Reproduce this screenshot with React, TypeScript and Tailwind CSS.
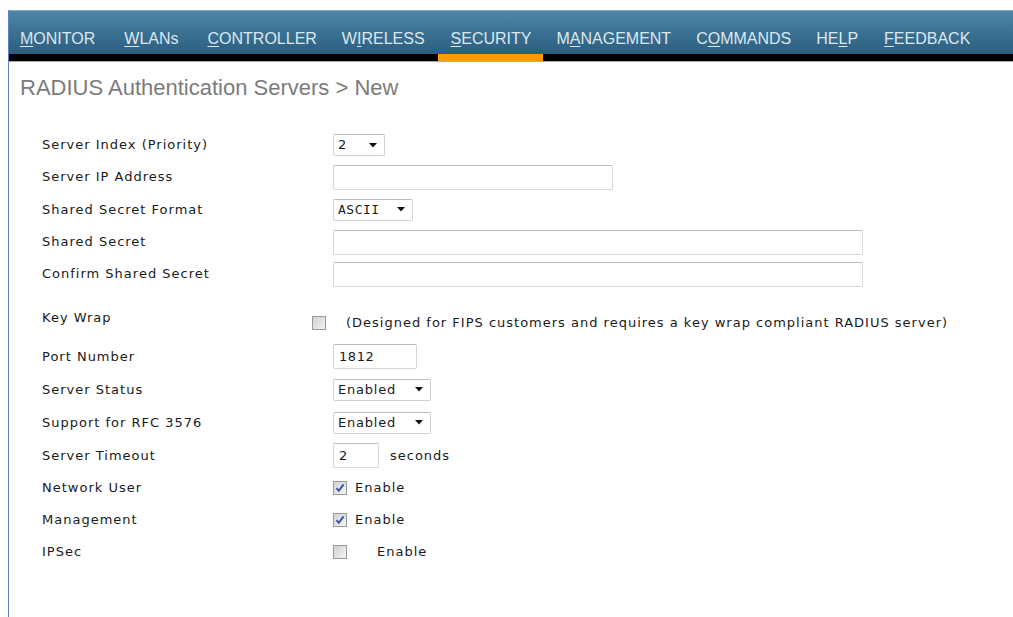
import React from 'react';

const navItems = [
  { name: 'MONITOR', key: 0, pad: 'pl-[11px] pr-[16px]' },
  { name: 'WLANs', key: 0, pad: 'pl-[13px] pr-[16px]' },
  { name: 'CONTROLLER', key: 0, pad: 'pl-[13px] pr-[12px]' },
  { name: 'WIRELESS', key: 1, pad: 'pl-[13px] pr-[13px]' },
  { name: 'SECURITY', key: 0, pad: 'pl-[13px] pr-[12px]', active: true },
  { name: 'MANAGEMENT', key: 1, pad: 'pl-[13px] pr-[12px]' },
  { name: 'COMMANDS', key: 1, pad: 'pl-[13px] pr-[12px]' },
  { name: 'HELP', key: 2, pad: 'pl-[13px] pr-[13px]' },
  { name: 'FEEDBACK', key: 0, pad: 'pl-[13px] pr-[13px]' },
];

function AccessKey({ text, index }: { text: string; index: number }) {
  return (
    <>
      {text.slice(0, index)}
      <span className="underline underline-offset-[2px]">{text[index]}</span>
      {text.slice(index + 1)}
    </>
  );
}

function Arrow() {
  return (
    <svg width="8" height="5" viewBox="0 0 8 5" className="shrink-0">
      <path d="M0 0h8L4 4.5z" fill="#111" />
    </svg>
  );
}

function Select({ value, width, mono }: { value: string; width: string; mono?: boolean }) {
  return (
    <div
      className={`flex h-[22px] items-center justify-between rounded-[2px] border border-[#d2d2d2] border-t-[#bdbdbd] bg-white pl-[4px] pr-[7px] ${width}`}
    >
      <span className={mono ? "font-['DejaVu_Sans_Mono',monospace] tracking-[0.5px]" : 'tracking-[0.8px]'}>{value}</span>
      <Arrow />
    </div>
  );
}

function TextBox({ value, width }: { value?: string; width: string }) {
  return (
    <div
      className={`flex h-[25px] items-center rounded-[2px] border border-[#d6d6d6] border-t-[#bcbcbc] bg-white pl-[5px] tracking-[0.6px] ${width}`}
    >
      {value}
    </div>
  );
}

function Checkbox({ checked }: { checked?: boolean }) {
  return (
    <div className="flex h-[14px] w-[14px] shrink-0 items-center justify-center border border-[#9a9a9a] bg-[linear-gradient(135deg,#d0d0d0,#f4f4f4)]">
      {checked && (
        <svg width="10" height="10" viewBox="0 0 10 10">
          <path d="M1.5 5.2l2.3 2.6L8.6 1.4" fill="none" stroke="#3552a8" strokeWidth="1.9" />
        </svg>
      )}
    </div>
  );
}

function Row({ label, height, children }: { label: string; height: string; children?: React.ReactNode }) {
  return (
    <div className={`flex items-center ${height}`}>
      <div className="w-[291px] shrink-0">{label}</div>
      {children}
    </div>
  );
}

export default function App() {
  return (
    <div className="h-[617px] w-[1013px] overflow-hidden bg-white pt-[10px]">
      <div className="ml-[8px] h-[607px] border-l border-[#5a82c0]">
        {/* top menu */}
        <nav className="flex border-t border-[#87a9c2] bg-[linear-gradient(to_bottom,#4d87a8_0px,#3a7193_22px,#2c5d7e_43px,#000_43px,#000_50px)] font-['Liberation_Sans',Arial,sans-serif] text-[16px] leading-[18px] text-[#dde7ee]">
          {navItems.map((item) => (
            <div key={item.name} className="flex flex-col">
              <div className={`flex h-[43px] items-end pb-[6px] ${item.pad}`}>
                <span>
                  <AccessKey text={item.name} index={item.key} />
                </span>
              </div>
              <div className={`h-[7px] ${item.active ? 'bg-[#ff9a00]' : ''}`} />
            </div>
          ))}
        </nav>
        <div className="h-px bg-[#a9a9a9]" />

        <h1 className="mt-[13px] pl-[11px] font-['Liberation_Sans',Arial,sans-serif] text-[22px] leading-[26px] text-[#7b7b7b]">
          RADIUS Authentication Servers &gt; New
        </h1>

        <div className="mt-[28px] pl-[33px] font-['DejaVu_Sans',Verdana,sans-serif] text-[13px] leading-[16px] tracking-[1px] text-[#1a1a1a]">
          <Row label="Server Index (Priority)" height="h-[32px]">
            <Select value="2" width="w-[52px]" />
          </Row>
          <Row label="Server IP Address" height="h-[32px]">
            <TextBox width="w-[280px]" />
          </Row>
          <Row label="Shared Secret Format" height="h-[33px]">
            <Select value="ASCII" width="w-[80px]" mono />
          </Row>
          <Row label="Shared Secret" height="h-[32px]">
            <TextBox width="w-[530px]" />
          </Row>
          <Row label="Confirm Shared Secret" height="h-[32px]">
            <TextBox width="w-[530px]" />
          </Row>

          <div className="mt-[16px] flex h-[34px] items-center">
            <div className="w-[270px] shrink-0 -translate-y-[5px]">Key Wrap</div>
            <Checkbox />
            <span className="ml-[20px]">
              (Designed for FIPS customers and requires a key wrap compliant RADIUS server)
            </span>
          </div>

          <Row label="Port Number" height="h-[33px]">
            <TextBox value="1812" width="w-[84px]" />
          </Row>
          <Row label="Server Status" height="h-[33px]">
            <Select value="Enabled" width="w-[98px]" />
          </Row>
          <Row label="Support for RFC 3576" height="h-[33px]">
            <Select value="Enabled" width="w-[98px]" />
          </Row>
          <Row label="Server Timeout" height="h-[33px]">
            <TextBox value="2" width="w-[46px]" />
            <span className="ml-[11px]">seconds</span>
          </Row>
          <Row label="Network User" height="h-[32px]">
            <Checkbox checked />
            <span className="ml-[8px]">Enable</span>
          </Row>
          <Row label="Management" height="h-[32px]">
            <Checkbox checked />
            <span className="ml-[8px]">Enable</span>
          </Row>
          <Row label="IPSec" height="h-[32px]">
            <Checkbox />
            <span className="ml-[30px]">Enable</span>
          </Row>
        </div>
      </div>
    </div>
  );
}
